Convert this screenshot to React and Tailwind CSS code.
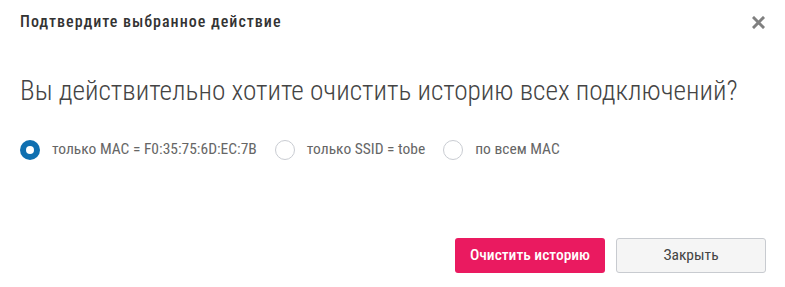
import { useState } from "react";

const options = [
  { id: "mac", label: "только MAC = F0:35:75:6D:EC:7B" },
  { id: "ssid", label: "только SSID = tobe" },
  { id: "all", label: "по всем MAC" },
];

const Radio = ({ checked }) => (
  <span
    className={`flex h-5 w-5 shrink-0 items-center justify-center rounded-full ${
      checked ? "bg-[#0f6fb0]" : "border border-[#c9ccd2] bg-white"
    }`}
  >
    {checked && <span className="h-2 w-2 rounded-full bg-white" />}
  </span>
);

const App = () => {
  const [selected, setSelected] = useState("mac");

  return (
    <div
      className="h-[287px] w-[785px] bg-white"
      style={{ fontFamily: '"Roboto Condensed", "DejaVu Sans Condensed", Roboto, sans-serif' }}
    >
      {/* header */}
      <div className="flex items-center justify-between pl-5 pr-[19px] pt-[11px]">
        <h4 className="text-[16px] font-medium leading-[22px] tracking-[1px] text-[#333]">
          Подтвердите выбранное действие
        </h4>
        <button className="flex h-4 w-4 items-center justify-center">
          <svg width="13" height="13" viewBox="0 0 13 13">
            <path d="M2 2 L11 11 M11 2 L2 11" stroke="#808080" strokeWidth="3" strokeLinecap="square" />
          </svg>
        </button>
      </div>

      {/* body */}
      <div className="px-5 pt-[42px]">
        <p className="text-[27.3px] font-light leading-[32px] text-[#444]">
          Вы действительно хотите очистить историю всех подключений?
        </p>

        <div className="mt-[31px] flex items-center">
          {options.map((o) => (
            <label
              key={o.id}
              onClick={() => setSelected(o.id)}
              className="mr-[18px] flex cursor-pointer items-center gap-3 text-[15.5px] text-[#666]"
            >
              <Radio checked={selected === o.id} />
              <span>{o.label}</span>
            </label>
          ))}
        </div>
      </div>

      {/* footer */}
      <div className="mt-[77px] flex justify-end gap-[11px] pr-[19px]">
        <button className="h-[35px] w-[150px] rounded-[3px] bg-[#ea1a60] text-[15.5px] font-medium text-white">
          Очистить историю
        </button>
        <button className="h-[35px] w-[150px] rounded-[3px] border border-[#c8cbd0] bg-[#f5f5f5] text-[15.5px] text-[#444]">
          Закрыть
        </button>
      </div>
    </div>
  );
};

export default App;
